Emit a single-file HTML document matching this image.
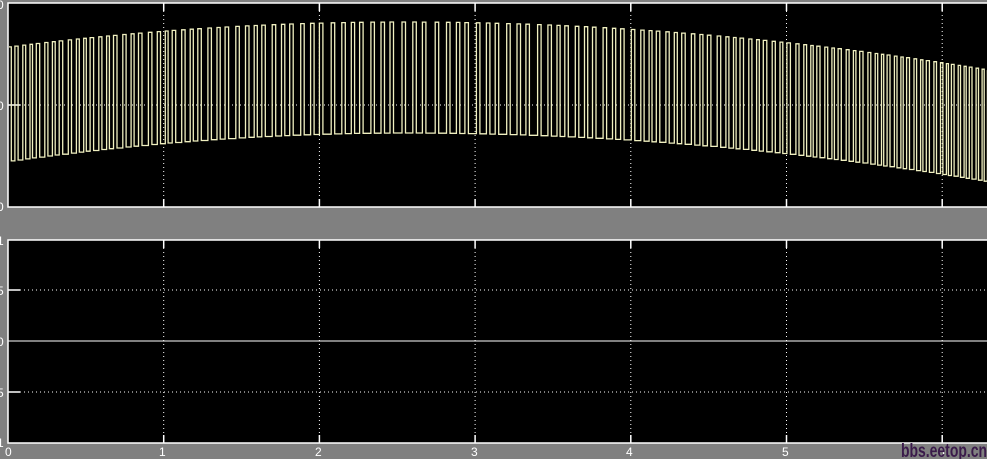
<!DOCTYPE html>
<html><head><style>
html,body{margin:0;padding:0;background:#808080;width:987px;height:459px;overflow:hidden}
svg{display:block}
text{font-family:"Liberation Sans",sans-serif;font-size:12px;fill:#fff}
</style></head><body>
<svg id="s" width="987" height="459" viewBox="0 0 987 459" xmlns="http://www.w3.org/2000/svg">
<rect x="0" y="0" width="987" height="459" fill="#808080"/>
<rect x="8" y="3" width="990" height="204" fill="#000" stroke="#fff" stroke-width="1.5"/>
<rect x="8" y="240" width="990" height="203" fill="#000" stroke="#fff" stroke-width="1.5"/>
<g id="grid" stroke="#fff" stroke-width="1" stroke-dasharray="1,3" fill="none"></g>
<g id="ticks" stroke="#fff" stroke-width="1.5" fill="none"></g>
<line x1="8" y1="341" x2="987" y2="341" stroke="#fff" stroke-width="1"/>
<path id="w" fill="none" stroke="#f0f0c0" stroke-width="1.3"/>
<text x="-3" y="9">0</text><text x="-3" y="110">0</text><text x="-3" y="211">0</text>
<text x="-3" y="245">1</text><text x="-3" y="295">5</text><text x="-3" y="346">0</text><text x="-3" y="397">5</text><text x="-3" y="447">1</text>
<text x="5" y="456">0</text><text x="159" y="456">1</text><text x="315" y="456">2</text><text x="471" y="456">3</text><text x="626" y="456">4</text><text x="782" y="456">5</text><text x="938" y="456">6</text>
<text x="901" y="457" textLength="86" lengthAdjust="spacingAndGlyphs" style="font-size:19px;font-weight:bold;fill:#3a1a4a">bbs.eetop.cn</text>
</svg>
<script>
var g=document.getElementById('grid'),t=document.getElementById('ticks'),ns='http://www.w3.org/2000/svg';
function L(p,x1,y1,x2,y2){var l=document.createElementNS(ns,'line');l.setAttribute('x1',x1);l.setAttribute('y1',y1);l.setAttribute('x2',x2);l.setAttribute('y2',y2);p.appendChild(l);}
for(var k=1;k<=6;k++){var x=8+k*155.7;
L(g,x,3,x,207);L(g,x,240,x,443);
L(t,x,3,x,11);L(t,x,199,x,207);L(t,x,240,x,248);L(t,x,435,x,443);}
L(g,8,105,987,105);L(g,8,290,987,290);L(g,8,392,987,392);
L(t,8,105,20,105);L(t,8,290,20,290);L(t,8,392,20,392);
function up(x){return x<400?22+25*Math.pow((400-x)/392,2):22+48*Math.pow((x-400)/587,2);}
function lo(x){return x<400?133+28*Math.pow((400-x)/392,2):133+49*Math.pow((x-400)/587,2);}
function per(x){var d=Math.abs(x-420)/560;return 11-5*d;}
var d='M9,'+up(9).toFixed(1),x=9,i=0;
while(x<987){var p=per(x)*(0.8+0.4*((i*37)%10)/10);var h=Math.min(3.5,p*0.4);
var x2=x+h;d+=' L'+x2.toFixed(1)+','+up(x).toFixed(1)+' L'+x2.toFixed(1)+','+lo(x).toFixed(1);
var x3=x+p;d+=' L'+x3.toFixed(1)+','+lo(x).toFixed(1)+' L'+x3.toFixed(1)+','+up(x3).toFixed(1);x=x3;i++;}
document.getElementById('w').setAttribute('d',d);
</script>
</body></html>
